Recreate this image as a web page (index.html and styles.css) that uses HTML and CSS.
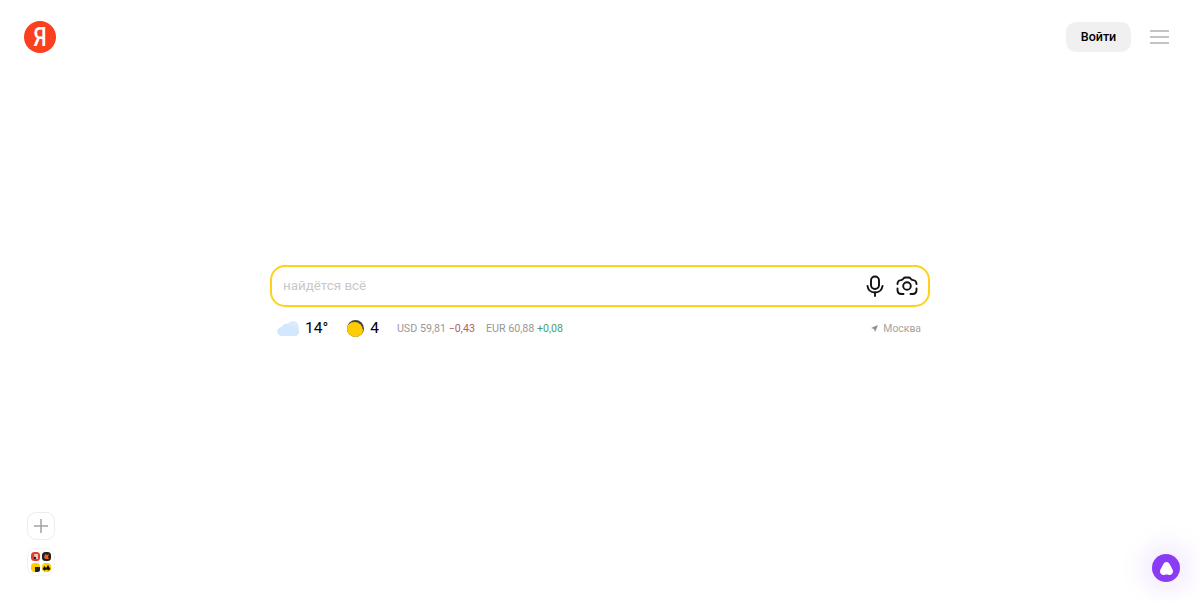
FILE: index.html
```html
<!DOCTYPE html>
<html lang="ru">
<head>
    <meta charset="UTF-8">
    <meta name="viewport" content="width=device-width, initial-scale=1.0">
    <title>Яндекс</title>
    <link rel="stylesheet" href="styles.css">
</head>
<body>
    <div class="page">
        <header class="header">
            <a class="logo"><span>Я</span></a>
            <div class="header-right">
                <button class="btn-login">Войти</button>
                <button class="burger" aria-label="Меню"><span></span><span></span><span></span></button>
            </div>
        </header>

        <main class="main">
            <div class="search-wrap">
                <div class="search">
                    <input class="search-input" type="text" placeholder="найдётся всё">
                    <svg class="search-icon" viewBox="0 0 24 24" fill="none" stroke="#111" stroke-width="1.900" stroke-linecap="round">
                        <rect x="8" y="2.500" width="8" height="12.500" rx="4"/>
                        <path d="M4.500 12c.5 4 3.500 6.500 7.500 6.500s7-2.500 7.500-6.500"/>
                        <path d="M12 18.500v3.500"/>
                    </svg>
                    <svg class="search-icon" viewBox="0 0 24 24" fill="none" stroke="#111" stroke-width="1.900" stroke-linecap="round">
                        <circle cx="12" cy="12" r="3.800"/>
                        <path d="M2.500 10c0-2.300 1.500-3.700 3.500-3.900 1.300-.1 1.800-.6 2.500-1.600.5-.8 1-1 2-1h3c1 0 1.500.2 2 1 .7 1 1.200 1.500 2.500 1.600 2 .2 3.500 1.600 3.500 3.900"/>
                        <path d="M2.500 14.500v1.500c0 2.500 1.500 4 4 4h2"/>
                        <path d="M21.500 14.500v1.500c0 2.500-1.500 4-4 4h-2"/>
                    </svg>
                </div>

                <div class="informer">
                    <div class="inf-item inf-weather">
                        <svg class="cloud" viewBox="0 0 24 15">
                            <circle cx="16" cy="6" r="6" fill="#dcecfc"/>
                            <path d="M5 15a4.500 4.500 0 0 1-.5-9A6 6 0 0 1 15.500 6.500 4.300 4.300 0 0 1 19.500 15z" fill="#d2e8fd"/>
                        </svg>
                        <span>14°</span>
                    </div>
                    <div class="inf-item inf-traffic">
                        <span class="moon"></span>
                        <span>4</span>
                    </div>
                    <div class="rates">
                        <span class="rate">USD 59,81 <span class="down">−0,43</span></span>
                        <span class="rate">EUR 60,88 <span class="up">+0,08</span></span>
                    </div>
                    <div class="city">
                        <svg class="city-arrow" viewBox="0 0 8 8"><path d="M8 0 0 3.300l3.300 1.300L4.700 8z" fill="#8f8f8f"/></svg>
                        <span>Москва</span>
                    </div>
                </div>
            </div>
        </main>

        <aside class="side">
            <button class="tile tile-add" aria-label="Добавить">
                <svg viewBox="0 0 14 14" width="14" height="14"><path d="M7 0v14M0 7h14" stroke="#a3a3a3" stroke-width="1.500"/></svg>
            </button>
            <button class="tile tile-apps" aria-label="Сервисы">
                <svg viewBox="0 0 20 20" width="20" height="20">
                    <rect width="9" height="9" rx="3.500" fill="#e5392b"/>
                    <path d="M3 2h4v5H4z" fill="#d4d0cc"/>
                    <path d="M3 5h2v2H3z" fill="#222"/>
                    <rect x="11" width="9" height="9" rx="3.500" fill="#1f1f1f"/>
                    <path d="M13 6l1-4 2 1 2-1-1 3 1 2-3 0z" fill="#e8641c"/>
                    <rect y="11" width="9" height="9" rx="3.500" fill="#fc0"/>
                    <path d="M4 15h5v2.500A2.500 2.500 0 0 1 6.500 20H4z" fill="#222"/>
                    <rect x="11" y="11" width="9" height="9" rx="3.500" fill="#fc0"/>
                    <path d="M11.500 17l2-3 1.500 2 2-3 2.500 4-2 1.500-2-1-2 1z" fill="#111"/>
                </svg>
            </button>
        </aside>
    </div>

    <button class="alice" aria-label="Алиса">
        <svg viewBox="0 0 14 14" width="13" height="13"><path d="M7 0C4.600 0 3.600 2.200 2.200 4.900 1 7.200 0 8.600 0 10.300 0 12.800 2 14 3.600 14c1.300 0 1.900-.5 3.400-.5s2.100.5 3.400.5c1.600 0 3.600-1.200 3.600-3.700 0-1.700-1-3.100-2.200-5.400C10.400 2.200 9.400 0 7 0z" fill="#fff"/></svg>
    </button>
</body>
</html>
```

FILE: styles.css
```css
* {
    box-sizing: border-box;
    margin: 0;
    padding: 0;
}

html, body {
    height: 100%;
}

body {
    background: white;
    color: #000;
    font-family: Roboto, "Noto Sans", sans-serif;
    overflow: hidden;
}

button {
    border: none;
    background: none;
    cursor: pointer;
    font-family: inherit;
}

.page {
    display: flex;
    flex-direction: column;
    height: 100vh;
}

.header {
    display: flex;
    justify-content: space-between;
    align-items: center;
    height: 74px;
    padding: 0 31px 0 24px;
}

.logo {
    display: flex;
    align-items: center;
    justify-content: center;
    width: 32px;
    height: 32px;
    border-radius: 50%;
    background: #fc3f1d;
    color: white;
    font-weight: 500;
    font-size: 26px;
}

.logo span {
    transform: scaleX(0.82);
}

.header-right {
    display: flex;
    align-items: center;
    gap: 19px;
}

.btn-login {
    width: 65px;
    height: 30px;
    padding-bottom: 1px;
    border-radius: 10px;
    background: #f0f0f0;
    font-size: 12.500px;
    font-weight: 500;
    color: #000;
}

.burger {
    display: flex;
    flex-direction: column;
    justify-content: space-between;
    width: 19px;
    height: 14px;
}

.burger span {
    display: block;
    height: 2px;
    background: #c4c4c4;
}

.main {
    flex: 1;
    display: flex;
    justify-content: center;
    padding-top: 191px;
}

.search-wrap {
    width: 660px;
}

.search {
    display: flex;
    align-items: center;
    gap: 8px;
    height: 42px;
    padding: 0 9px 0 11px;
    border: 2px solid #ffd11a;
    border-radius: 15px;
}

.search-input {
    flex: 1;
    padding-bottom: 2px;
    border: none;
    outline: none;
    font-family: inherit;
    font-size: 13.400px;
    background: none;
}

.search-input::placeholder {
    color: #c8c8c8;
    opacity: 1;
}

.search-icon {
    width: 24px;
    height: 24px;
}

.informer {
    display: flex;
    align-items: center;
    height: 28px;
    margin-top: 7px;
    padding: 0 9px 0 7px;
}

.inf-item {
    display: flex;
    align-items: center;
    font-size: 15.500px;
}

.inf-weather {
    gap: 4px;
    margin-right: 19px;
}

.cloud {
    width: 24px;
    height: 15px;
}

.inf-traffic {
    gap: 6px;
    margin-right: 18px;
}

.moon {
    position: relative;
    overflow: hidden;
    width: 17px;
    height: 17px;
    border-radius: 50%;
    background: #444;
}

.moon::before {
    content: "";
    position: absolute;
    top: 2px;
    left: -1px;
    width: 17px;
    height: 17px;
    border-radius: 50%;
    background: #fc0;
}

.rates {
    display: flex;
    gap: 11px;
    font-size: 10.700px;
    color: #989898;
}

.down {
    color: #b5605e;
}

.up {
    color: #4f9f6f;
}

.city {
    display: flex;
    align-items: center;
    gap: 5px;
    margin-left: auto;
    font-size: 10.400px;
    color: #a3a3a3;
}

.city-arrow {
    width: 7px;
    height: 7px;
}

.side {
    display: flex;
    flex-direction: column;
    gap: 8px;
    align-items: flex-start;
    padding: 0 0 25px 27px;
}

.tile {
    display: flex;
    align-items: center;
    justify-content: center;
    width: 28px;
    height: 28px;
    border: 1px solid #ececec;
    border-radius: 9px;
    background: white;
}

.tile-apps {
    border-color: #f3f3f3;
}

.alice {
    position: fixed;
    right: 20px;
    bottom: 19px;
    display: flex;
    align-items: center;
    justify-content: center;
    width: 28px;
    height: 28px;
    border-radius: 50%;
    background: #8a3cf5;
    box-shadow: 0 0 24px 10px rgba(138, 60, 245, 0.1);
}
```
